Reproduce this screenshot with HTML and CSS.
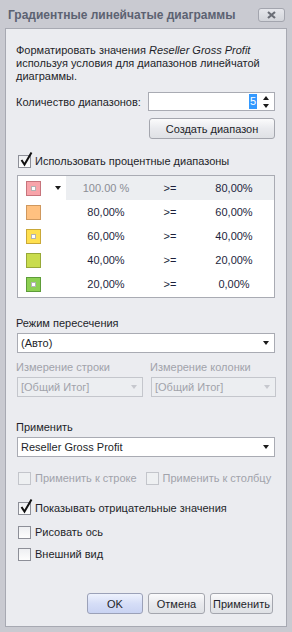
FILE: index.html
```html
<!DOCTYPE html>
<html lang="ru">
<head>
<meta charset="utf-8">
<title>Градиентные линейчатые диаграммы</title>
<link rel="stylesheet" href="styles.css">
</head>
<body>
<div class="win">
  <div class="titlebar">
    <span class="title">Градиентные линейчатые диаграммы</span>
    <div class="close"><svg width="9" height="8" viewBox="0 0 9 8"><path d="M1 1 L8 7 M8 1 L1 7" stroke="#6a6d76" stroke-width="2.2" fill="none"/></svg></div>
  </div>
  <div class="panel">
    <p class="desc">Форматировать значения <i>Reseller Gross Profit</i><br>используя условия для диапазонов линейчатой<br>диаграммы.</p>

    <div class="countrow">
      <span class="lbl">Количество диапазонов:</span>
      <div class="spin">
        <span class="sel">5</span>
        <div class="spinarrows"><span class="tri up"></span><span class="tri down"></span></div>
      </div>
    </div>

    <div class="createrow"><div class="btn create">Создать диапазон</div></div>

    <div class="chk">
      <span class="cbox"></span>
      <svg class="tick" width="14" height="16" viewBox="0 0 14 16"><path d="M2.5 9 L5.5 13.5 L12.5 1.5" stroke="#111" stroke-width="2" fill="none" stroke-linejoin="miter"/></svg>
      <span>Использовать процентные диапазоны</span>
    </div>

    <div class="table">
      <div class="row first">
        <div class="c0"><span class="sw s1"><i></i></span><span class="tri down dd"></span></div>
        <div class="c1 hl grey">100.00 %</div>
        <div class="c2 hl">&gt;=</div>
        <div class="c3 hl">80,00%</div>
      </div>
      <div class="row">
        <div class="c0"><span class="sw s2"></span></div>
        <div class="c1">80,00%</div>
        <div class="c2">&gt;=</div>
        <div class="c3">60,00%</div>
      </div>
      <div class="row">
        <div class="c0"><span class="sw s3"><i></i></span></div>
        <div class="c1">60,00%</div>
        <div class="c2">&gt;=</div>
        <div class="c3">40,00%</div>
      </div>
      <div class="row">
        <div class="c0"><span class="sw s4"></span></div>
        <div class="c1">40,00%</div>
        <div class="c2">&gt;=</div>
        <div class="c3">20,00%</div>
      </div>
      <div class="row">
        <div class="c0"><span class="sw s5"><i></i></span></div>
        <div class="c1">20,00%</div>
        <div class="c2">&gt;=</div>
        <div class="c3">0,00%</div>
      </div>
    </div>

    <div class="label l-mode">Режим пересечения</div>
    <div class="combo"><span>(Авто)</span><span class="tri down"></span></div>

    <div class="grid2 l-dims">
      <div class="label dis">Измерение строки</div>
      <div class="label dis">Измерение колонки</div>
    </div>
    <div class="grid2 g-combos">
      <div class="combo disabled"><span>[Общий Итог]</span><span class="tri down"></span></div>
      <div class="combo disabled"><span>[Общий Итог]</span><span class="tri down"></span></div>
    </div>

    <div class="label l-apply">Применить</div>
    <div class="combo"><span>Reseller Gross Profit</span><span class="tri down"></span></div>

    <div class="disrow">
      <div class="chk dis"><span class="cbox"></span><span>Применить к строке</span></div>
      <div class="chk dis second"><span class="cbox"></span><span>Применить к столбцу</span></div>
    </div>

    <div class="chk c-neg">
      <span class="cbox"></span>
      <svg class="tick" width="14" height="16" viewBox="0 0 14 16"><path d="M2.5 9 L5.5 13.5 L12.5 1.5" stroke="#111" stroke-width="2" fill="none"/></svg>
      <span>Показывать отрицательные значения</span>
    </div>
    <div class="chk c-axis"><span class="cbox"></span><span>Рисовать ось</span></div>
    <div class="chk c-look"><span class="cbox"></span><span>Внешний вид</span></div>

    <div class="buttons">
      <div class="btn ok">OK</div>
      <div class="btn cancel">Отмена</div>
      <div class="btn apply">Применить</div>
    </div>
  </div>
</div>
</body>
</html>
```

FILE: styles.css
```css
* { box-sizing: border-box; }
html, body { margin: 0; padding: 0; }
body {
  width: 292px;
  height: 632px;
  background: #c9cad1;
  font-family: "Liberation Sans", Arial, sans-serif;
  font-size: 11px;
  color: #1e1f2a;
  overflow: hidden;
}
.win {
  width: 292px;
  height: 632px;
  background: #c9cad1;
  display: flex;
  flex-direction: column;
}
.titlebar {
  height: 28px;
  display: flex;
  align-items: center;
  padding-left: 8px;
  padding-top: 2px;
}
.title {
  font-weight: bold;
  font-size: 12px;
  color: #5c6272;
}
.close {
  margin-left: auto;
  margin-right: 7px;
  width: 27px;
  height: 14px;
  border: 1px solid #a3a5ae;
  border-radius: 3px;
  background: linear-gradient(#e6e7ec, #d2d4da);
  display: flex;
  align-items: center;
  justify-content: center;
  margin-top: -1px;
}
.panel {
  margin: 0 5px;
  height: 599px;
  border: 1px solid #a7a9b2;
  background: #ebecf0;
  padding: 15px 11px 0 10px;
  display: flex;
  flex-direction: column;
}
.desc {
  margin: 0;
  line-height: 13px;
}
.countrow {
  margin-top: 9px;
  display: flex;
  align-items: center;
  justify-content: space-between;
  height: 19px;
}
.spin {
  width: 127px;
  height: 19px;
  background: #fff;
  border: 1px solid #a9abb3;
  display: flex;
  align-items: center;
  justify-content: flex-end;
  padding-right: 5px;
}
.sel {
  background: #3399ff;
  color: #fff;
  padding: 1px 1px;
  line-height: 13px;
  margin-right: 6px;
}
.spinarrows {
  display: flex;
  flex-direction: column;
  gap: 4px;
}
.tri {
  display: block;
  width: 0;
  height: 0;
  border-left: 3.5px solid transparent;
  border-right: 3.5px solid transparent;
}
.tri.down { border-top: 4px solid #1a1a1a; }
.tri.up { border-bottom: 4px solid #1a1a1a; }
.createrow {
  margin-top: 7px;
  display: flex;
  justify-content: flex-end;
}
.btn {
  height: 21px;
  border: 1px solid #a4a6ae;
  border-radius: 3px;
  background: linear-gradient(#fbfbfc, #e9eaee 50%, #dfe1e5);
  display: flex;
  align-items: center;
  justify-content: center;
  color: #1e1f2a;
}
.create { width: 126px; }
.chk {
  display: flex;
  align-items: center;
  height: 14px;
  position: relative;
  padding-left: 2px;
}
.cbox {
  width: 13px;
  height: 13px;
  border: 1px solid #8d8f98;
  background: linear-gradient(#eeeff2, #fdfdfd);
  margin-right: 4px;
  flex: none;
}
.tick {
  position: absolute;
  left: 3px;
  top: -3px;
}
.chk:first-of-type {}
.countrow + .createrow + .chk { margin-top: 15px; }
.table {
  margin-top: 7px;
  margin-left: 1px;
  height: 123px;
  border: 1px solid #a9abb3;
  background: #fff;
  padding-top: 0;
  color: #1d1f3c;
}
.row {
  height: 24px;
  display: grid;
  grid-template-columns: 48px 80px 48px 1fr;
  align-items: stretch;
}
.row > div {
  display: flex;
  align-items: center;
  justify-content: center;
}
.row > .c0 {
  justify-content: flex-start;
  padding-left: 8px;
}
.hl { background: #eceef1; }
.grey { color: #8b8d95; }
.sw {
  width: 15px;
  height: 15px;
  border: 1px solid;
  display: flex;
  align-items: center;
  justify-content: center;
}
.sw i {
  width: 5px;
  height: 5px;
  background: #fff;
  border: 1px solid rgba(0,0,0,0.3);
}
.s1 { background: #f8a4aa; border-color: #c7747c; }
.s2 { background: #ffc180; border-color: #cf985e; }
.s3 { background: #ffe04f; border-color: #c9a838; }
.s4 { background: #c9dc4d; border-color: #97a838; }
.s5 { background: #8dd052; border-color: #5d9c39; }
.dd { margin-left: 14px; }
.label {
  height: 14px;
  line-height: 14px;
}
.label.dis { color: #a1a3ab; }
.l-mode { margin-top: 18px; }
.combo {
  margin-top: 3px;
  margin-left: 1px;
  height: 20px;
  background: #fff;
  border: 1px solid #a9abb3;
  display: flex;
  align-items: center;
  justify-content: space-between;
  padding: 0 5px 0 3px;
}
.combo.disabled {
  background: #eceef1;
  border-color: #c4c6cc;
  color: #a1a3ab;
  margin-left: 0;
}
.combo.disabled .tri.down { border-top-color: #c6c8ce; }
.grid2 {
  display: grid;
  grid-template-columns: 126px 125px;
  column-gap: 8px;
}
.g-combos { margin-left: 1px; margin-top: 3px; }
.g-combos .combo { margin-top: 0; }
.l-dims { margin-top: 7px; }
.l-apply { margin-top: 23px; }
.disrow {
  margin-top: 14px;
  display: flex;
}
.chk.dis { color: #a1a3ab; }
.chk.dis .cbox { border-color: #c3c5cb; background: #eef0f2; }
.chk.second { margin-left: 9px; padding-left: 0; }
.c-neg { margin-top: 16px; }
.c-axis { margin-top: 10px; }
.c-look { margin-top: 8px; }
.buttons {
  margin-top: 32px;
  margin-right: 2px;
  display: flex;
  justify-content: flex-end;
  gap: 5px;
}
.ok {
  width: 56px;
  border-color: #9ba1b8;
  background: linear-gradient(#eef2fd, #d6def7 50%, #c9d3f2);
}
.cancel { width: 57px; }
.apply { width: 63px; }
```
